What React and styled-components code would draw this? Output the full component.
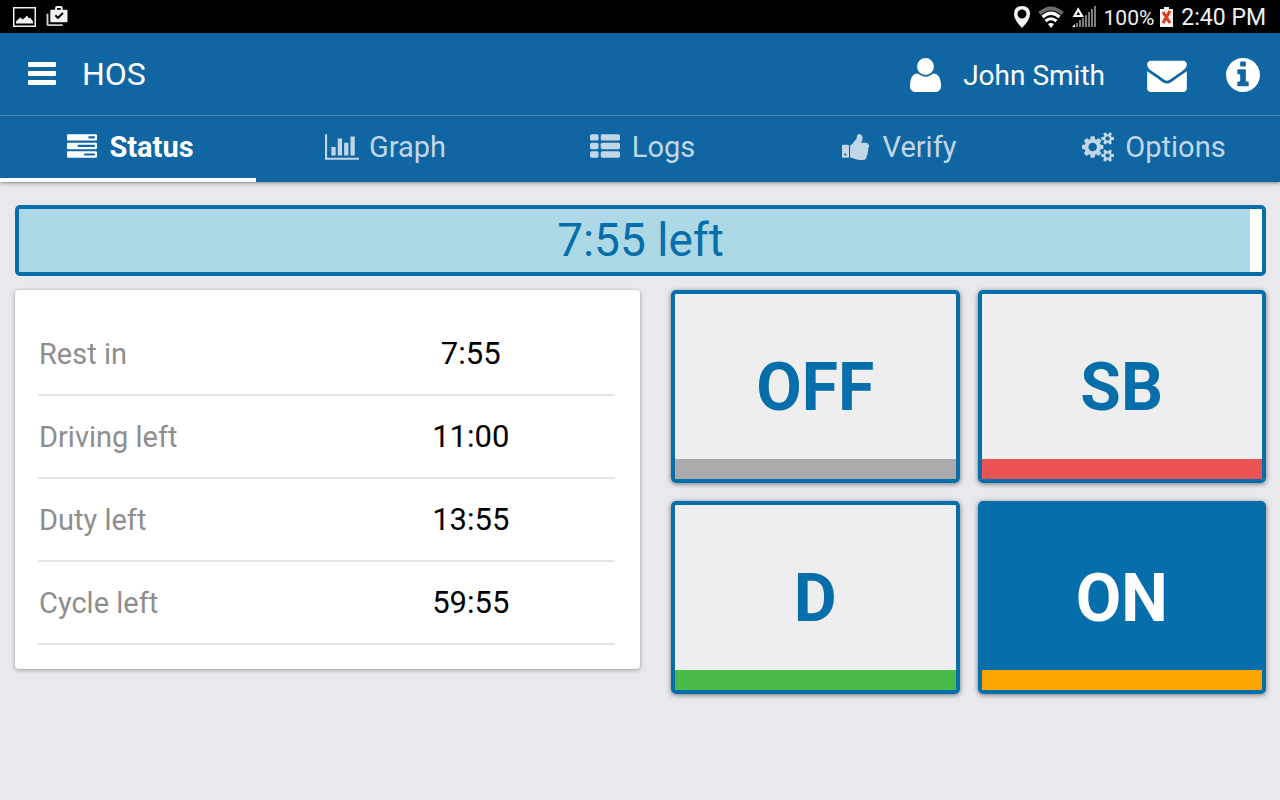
import React from "react";
import styled, { createGlobalStyle } from "styled-components";

const GlobalStyle = createGlobalStyle`
  *, *::before, *::after { box-sizing: border-box; }
  body {
    margin: 0;
    background: #e8e9ed;
    font-family: Roboto, "Liberation Sans", sans-serif;
  }
  button { font-family: inherit; cursor: pointer; }
`;

const StatusBar = styled.div`
  display: flex;
  align-items: center;
  justify-content: space-between;
  height: 33px;
  padding: 0 14px 0 13px;
  background: #000;
  color: #f2f2f2;
`;

const StatusGroup = styled.div`
  display: flex;
  align-items: center;
  gap: ${(p) => p.$gap}px;
`;

const StatusText = styled.span`
  font-size: ${(p) => (p.$large ? 23 : 21)}px;
  line-height: 34px;
  padding-top: 2px;
  white-space: nowrap;
`;

const Icon = styled.svg`
  display: block;
  flex: none;
  fill: currentColor;
`;

const AppBar = styled.header`
  position: relative;
  background: #1066a3;
  color: #fff;
  box-shadow: 0 1px 4px rgba(0, 0, 0, 0.45);
`;

const TitleRow = styled.div`
  display: flex;
  align-items: center;
  justify-content: space-between;
  height: 83px;
  padding: 0 20px 0 28px;
  border-bottom: 1px solid #5288b5;
`;

const TitleGroup = styled.div`
  display: flex;
  align-items: center;
  gap: 26px;
`;

const Title = styled.h1`
  margin: 0;
  font-size: 32px;
  font-weight: 400;
  line-height: 40px;
`;

const Actions = styled.div`
  display: flex;
  align-items: center;
  gap: 39px;
  padding-top: 2px;
`;

const IconButton = styled.button`
  display: flex;
  align-items: center;
  gap: 22px;
  padding: 0;
  border: 0;
  background: none;
  color: inherit;
  font-size: 28px;
  line-height: 36px;
`;

const UserButton = styled(IconButton)`
  padding-right: 3px;
`;

const UserName = styled.span`
  padding-top: 2px;
`;

const Tabs = styled.nav`
  display: grid;
  grid-template-columns: repeat(5, 1fr);
`;

const Tab = styled.a`
  display: flex;
  align-items: center;
  justify-content: center;
  gap: 10px;
  height: 66px;
  padding-left: 3px;
  border-bottom: 4px solid ${(p) => (p.$active ? "#fff" : "transparent")};
  color: ${(p) => (p.$active ? "#fff" : "#c1d7e7")};
  font-size: 29px;
  font-weight: ${(p) => (p.$active ? 700 : 400)};
  line-height: 36px;
  text-decoration: none;
`;

const TabIconSlot = styled.span`
  display: flex;
  justify-content: center;
  width: 34px;
`;

const Main = styled.main`
  display: grid;
  gap: 14px;
  padding: 23px 14px 24px 15px;
`;

const Progress = styled.div`
  display: grid;
  height: 71px;
  border: 4px solid #066fab;
  border-radius: 5px;
  background: #fff;
  color: #066fab;
`;

const ProgressFill = styled.div`
  grid-area: 1 / 1;
  background: #add8e6;
`;

const ProgressLabel = styled.span`
  grid-area: 1 / 1;
  font-size: 46px;
  line-height: 62px;
  text-align: center;
`;

const Columns = styled.div`
  display: grid;
  grid-template-columns: 625fr 595fr;
  align-items: start;
  gap: 31px;
`;

const Card = styled.section`
  padding: 23px 25px 24px 23px;
  border-radius: 4px;
  background: #fff;
  box-shadow: 0 1px 4px rgba(0, 0, 0, 0.35);
`;

const Times = styled.table`
  width: 100%;
  table-layout: fixed;
  border-collapse: separate;
  border-spacing: 0;
  line-height: 36px;
`;

const TimeLabel = styled.th`
  height: 83px;
  padding: 0 1px;
  border-bottom: 2px solid #e3e4e5;
  color: #8e8e8e;
  font-size: 29px;
  font-weight: 400;
  text-align: left;
`;

const TimeValue = styled.td`
  padding: 0;
  border-bottom: 2px solid #e3e4e5;
  color: #000;
  font-size: 31px;
  text-align: center;
`;

const DutyGrid = styled.div`
  display: grid;
  grid-template-columns: 1fr 1fr;
  gap: 18px;
`;

const DutyButton = styled.button`
  display: flex;
  align-items: center;
  justify-content: center;
  height: 193px;
  padding: 2px 0 0;
  border: 4px solid #066fab;
  border-radius: 5px;
  background: linear-gradient(
    to top,
    ${(p) => p.$stripe} 20px,
    ${(p) => (p.$active ? "#066fab" : "#eee")} 20px
  ) padding-box;
  color: ${(p) => (p.$active ? "#fff" : "#066fab")};
  box-shadow: 0 1px 5px rgba(0, 0, 0, 0.5);
  font-size: 66px;
  font-weight: 700;
  line-height: 80px;
`;

const BarsIcon = () => (
  <Icon width="28" height="24" viewBox="0 0 28 24" aria-hidden="true">
    <rect y="0" width="28" height="5" rx="1" />
    <rect y="9" width="28" height="5" rx="1" />
    <rect y="18" width="28" height="5" rx="1" />
  </Icon>
);

const UserIcon = () => (
  <Icon width="31" height="34" viewBox="192 128 1408 1536" aria-hidden="true">
    <path d="M1600 1405q0 120-73 189.5t-194 69.5h-874q-121 0-194-69.5t-73-189.5q0-53 3.5-103.5t14-109 26.5-108.5 43-97.5 62-81 85.5-53.5 111.5-20q9 0 42 21.5t74.5 48 108 48 133.5 21.5 133.5-21.5 108-48 74.5-48 42-21.5q61 0 111.5 20t85.5 53.5 62 81 43 97.5 26.5 108.5 14 109 3.5 103.5zm-320-893q0 159-112.5 271.5t-271.5 112.5-271.5-112.5-112.5-271.5 112.5-271.5 271.5-112.5 271.5 112.5 112.5 271.5z" />
  </Icon>
);

const EnvelopeIcon = () => (
  <Icon width="40" height="34" viewBox="0 128 1792 1536" aria-hidden="true">
    <path d="M1792 710v794q0 66-47 113t-113 47h-1472q-66 0-113-47t-47-113v-794q44 49 101 87 362 246 497 345 57 42 92.5 65.5t94.5 48 110 24.5h2q51 0 110-24.5t94.5-48 92.5-65.5q170-123 498-345 57-39 100-87zm0-294q0 79-49 151t-122 123q-376 261-468 325-10 7-42.5 31t-54 38.5-52 32.5-57.5 27-50 9h-2q-23 0-50-9t-57.5-27-52-32.5-54-38.5-42.5-31q-91-64-262-182.5t-205-142.5q-62-42-117-115.5t-55-136.5q0-78 41.5-130t118.5-52h1472q65 0 112.5 47t47.5 113z" />
  </Icon>
);

const InfoIcon = () => (
  <Icon width="34" height="34" viewBox="128 128 1536 1536" aria-hidden="true">
    <path d="M1152 1376v-160q0-14-9-23t-23-9h-96v-512q0-14-9-23t-23-9h-320q-14 0-23 9t-9 23v160q0 14 9 23t23 9h96v320h-96q-14 0-23 9t-9 23v160q0 14 9 23t23 9h448q14 0 23-9t9-23zm-128-896v-160q0-14-9-23t-23-9h-192q-14 0-23 9t-9 23v160q0 14 9 23t23 9h192q14 0 23-9t9-23zm640 416q0 209-103 385.5t-279.5 279.5-385.5 103-385.5-103-279.5-279.5-103-385.5 103-385.5 279.5-279.5 385.5-103 385.5 103 279.5 279.5 103 385.5z" />
  </Icon>
);

const TasksIcon = () => (
  <Icon width="30" height="26" viewBox="0 128 1792 1536" aria-hidden="true">
    <path
      fillRule="evenodd"
      d="M64 128h1664q64 0 64 64v256q0 64-64 64h-1664q-64 0-64-64v-256q0-64 64-64zM1280 256v128h384v-128zM64 640h1664q64 0 64 64v256q0 64-64 64h-1664q-64 0-64-64v-256q0-64 64-64zM640 768v128h1024v-128zM64 1152h1664q64 0 64 64v256q0 64-64 64h-1664q-64 0-64-64v-256q0-64 64-64zM1024 1280v128h640v-128z"
    />
  </Icon>
);

const ChartIcon = () => (
  <Icon width="34" height="26" viewBox="0 128 2048 1536" aria-hidden="true">
    <path d="M640 896v512h-256v-512h256zm384-512v1024h-256v-1024h256zm1024 1152v128h-2048v-1536h128v1408h1920zm-640-896v768h-256v-768h256zm384-384v1152h-256v-1152h256z" />
  </Icon>
);

const ListIcon = () => (
  <Icon width="30" height="26" viewBox="0 0 1792 1536" aria-hidden="true">
    {[0, 512, 1024].map((y) => (
      <g key={y}>
        <rect y={y} width="512" height="384" rx="96" />
        <rect x="640" y={y} width="1152" height="384" rx="96" />
      </g>
    ))}
  </Icon>
);

const ThumbIcon = () => (
  <Icon width="27" height="26" viewBox="64 128 1600 1536" aria-hidden="true">
    <path d="M320 1344q0-26-19-45t-45-19q-27 0-45.500 19t-18.500 45q0 27 18.500 45.500t45.500 18.500q26 0 45-18.500t19-45.500zm160-512v640q0 26-19 45t-45 19h-288q-26 0-45-19t-19-45v-640q0-26 19-45t45-19h288q26 0 45 19t19 45zm1184 0q0 86-55 149 15 44 15 76 3 76-43 137 17 56 0 117-15 57-54 94 9 112-49 181-64 76-197 78h-129q-66 0-144-15.500t-121.500-29-120.500-39.500q-123-43-158-44-26-1-45-19.500t-19-44.500v-641q0-25 18-43.500t43-20.500q24-2 76-59t101-121q68-87 101-120 18-18 31-48t17.500-48.500 13.500-60.500q7-39 12.500-61t19.500-52 34-50q19-19 45-19 46 0 82.500 10.500t60 26 40 40.500 24 45 12 50 5 45 .500 39q0 38-9.500 76t-19 60-27.500 56q-3 6-10 18t-11 22-8 24h277q78 0 135 57t57 135z" />
  </Icon>
);

const SMALL_COG =
  "v140q0 16-149 31-12 27-30 52 51 113 51 138 0 4-4 7-122 71-124 71-8 0-46-47t-52-68q-20 2-30 2t-30-2q-14 21-52 68t-46 47q-2 0-124-71-4-3-4-7 0-25 51-138-18-25-30-52-149-15-149-31v-140q0-16 149-31 13-29 30-52-51-113-51-138 0-4 4-7 4-2 35-20t59-34 30-16q8 0 46 46.5t52 67.5q20-2 30-2t30 2q51-71 92-112l6-2q4 0 124 70 4 3 4 7 0 25-51 138 17 23 30 52 149 15 149 31z";

const CogsIcon = () => (
  <Icon width="32" height="30" viewBox="0 0 1920 1792" aria-hidden="true">
    <path
      d={
        "M896 896q0-106-75-181t-181-75-181 75-75 181 75 181 181 75 181-75 75-181zm768 512q0-52-38-90t-90-38-90 38-38 90q0 53 37.5 90.5t90.5 37.5 90.5-37.5 37.5-90.5zm0-1024q0-52-38-90t-90-38-90 38-38 90q0 53 37.5 90.5t90.5 37.5 90.5-37.5 37.5-90.5zm-384 421v185q0 10-7 19.5t-16 10.5l-155 24q-11 35-32 76 34 48 90 115 7 11 7 20 0 12-7 19-23 30-82.5 89.5t-78.5 59.5q-11 0-21-7l-115-90q-37 19-77 31-11 108-23 155-7 24-30 24h-186q-11 0-20-7.5t-10-17.5l-23-153q-34-10-75-31l-118 89q-7 7-20 7-11 0-21-8-144-133-144-160 0-9 7-19 10-14 41-53t47-61q-23-44-35-82l-152-24q-10-1-17-9.5t-7-19.5v-185q0-10 7-19.5t16-10.5l155-24q11-35 32-76-34-48-90-115-7-11-7-20 0-12 7-20 22-30 82-89t79-59q11 0 21 7l115 90q34-18 77-32 11-108 23-154 7-24 30-24h186q11 0 20 7.5t10 17.5l23 153q34 10 75 31l118-89q8-7 20-7 11 0 21 8 144 133 144 160 0 8-7 19-12 16-42 54t-45 60q23 48 34 82l152 23q10 2 17 10.5t7 19.5zm640 533" +
        SMALL_COG +
        "m0-1024" +
        SMALL_COG
      }
    />
  </Icon>
);

const PictureIcon = () => (
  <Icon width="23" height="20" viewBox="0 0 23 20" aria-hidden="true">
    <path fillRule="evenodd" d="M0 0h23v20H0zM1.500 1.500v17h20v-17z" />
    <path d="M3 16.500v-2l4-4 3 2 4-4 2 3 1-1 3 4v2z" />
  </Icon>
);

const ClipboardIcon = () => (
  <Icon width="22" height="21" viewBox="0 0 22 22" aria-hidden="true">
    <path d="M0 8h2v11h15v2H2q-2 0-2-2z" opacity="0.85" />
    <path
      fillRule="evenodd"
      d="M9 4V2q0-2 2-2h4q2 0 2 2v2h4q1 0 1 1v11q0 1-1 1H5q-1 0-1-1V5q0-1 1-1zM11 4h4V2h-4zM8.500 10.500l3.500 3.500 6-6-1.500-1.500-4.500 4.500-2-2z"
    />
  </Icon>
);

const PinIcon = () => (
  <Icon width="16" height="22" viewBox="0 0 16 22" aria-hidden="true">
    <path
      fillRule="evenodd"
      d="M8 0q8 0 8 8 0 6-8 14Q0 14 0 8 0 0 8 0zM8 3.500a4.500 4.500 0 1 0 0 9a4.500 4.500 0 1 0 0-9z"
    />
  </Icon>
);

const WifiIcon = () => (
  <Icon width="26" height="22" viewBox="0 0 26 22" aria-hidden="true">
    <g fill="none">
      <path d="M1.500 7.500Q13-2.500 24.500 7.500" stroke="#6b6b6b" strokeWidth="4" />
      <path d="M4.500 11Q13 3.500 21.500 11" stroke="#fff" strokeWidth="3.400" />
      <path d="M7.500 15Q13 10.500 18.500 15" stroke="#fff" strokeWidth="3" />
    </g>
    <path d="M10 18q3-2 6 0l-3 4z" fill="#fff" />
  </Icon>
);

const SignalIcon = () => (
  <Icon width="24" height="23" viewBox="0 0 24 23" aria-hidden="true">
    <g fill="#7c7c7c">
      <rect x="4" y="18" width="2" height="4" />
      <rect x="7" y="15" width="2" height="7" />
      <rect x="10" y="13" width="2" height="9" />
      <rect x="13" y="10" width="2" height="12" />
      <rect x="16" y="7" width="2" height="15" />
      <rect x="19" y="4" width="2" height="18" />
      <rect x="22" y="1" width="2" height="21" />
    </g>
    <path d="M0 22l3-3v3z" fill="#fff" />
    <path d="M2.500 11h7.500L6.200 4.500z" fill="#000" stroke="#fff" strokeWidth="2.200" />
  </Icon>
);

const BatteryIcon = () => (
  <Icon width="13" height="20" viewBox="0 0 13 20" aria-hidden="true">
    <path d="M4 0h5v2h4v18H0V2h4z" fill="#f4f4f4" />
    <path d="M3 5l7 11M10 4L3 16" fill="none" stroke="#e23a17" strokeWidth="3" />
  </Icon>
);

const tabs = [
  { label: "Status", icon: TasksIcon, active: true },
  { label: "Graph", icon: ChartIcon },
  { label: "Logs", icon: ListIcon },
  { label: "Verify", icon: ThumbIcon },
  { label: "Options", icon: CogsIcon },
];

const times = [
  ["Rest in", "7:55"],
  ["Driving left", "11:00"],
  ["Duty left", "13:55"],
  ["Cycle left", "59:55"],
];

const duties = [
  { label: "OFF", stripe: "#aaa" },
  { label: "SB", stripe: "#ea5455" },
  { label: "D", stripe: "#4abb4a" },
  { label: "ON", stripe: "#ffa500", active: true },
];

export default function App() {
  return (
    <>
      <GlobalStyle />
      <StatusBar>
        <StatusGroup $gap={10}>
          <PictureIcon />
          <ClipboardIcon />
        </StatusGroup>
        <StatusGroup $gap={8}>
          <PinIcon />
          <WifiIcon />
          <SignalIcon />
          <StatusGroup $gap={6}>
            <StatusText>100%</StatusText>
            <BatteryIcon />
          </StatusGroup>
          <StatusText $large>2:40 PM</StatusText>
        </StatusGroup>
      </StatusBar>
      <AppBar>
        <TitleRow>
          <TitleGroup>
            <IconButton type="button" aria-label="Menu">
              <BarsIcon />
            </IconButton>
            <Title>HOS</Title>
          </TitleGroup>
          <Actions>
            <UserButton type="button">
              <UserIcon />
              <UserName>John Smith</UserName>
            </UserButton>
            <IconButton type="button" aria-label="Messages">
              <EnvelopeIcon />
            </IconButton>
            <IconButton type="button" aria-label="Information">
              <InfoIcon />
            </IconButton>
          </Actions>
        </TitleRow>
        <Tabs>
          {tabs.map(({ label, icon: TabIcon, active }) => (
            <Tab
              key={label}
              href={"#" + label.toLowerCase()}
              $active={active}
              aria-current={active ? "page" : undefined}
            >
              <TabIconSlot>
                <TabIcon />
              </TabIconSlot>
              {label}
            </Tab>
          ))}
        </Tabs>
      </AppBar>
      <Main>
        <Progress role="progressbar" aria-valuenow={99} aria-label="Time left">
          <ProgressFill style={{ width: "99%" }} />
          <ProgressLabel>7:55 left</ProgressLabel>
        </Progress>
        <Columns>
          <Card>
            <Times>
              <tbody>
                {times.map(([label, value]) => (
                  <tr key={label}>
                    <TimeLabel scope="row">{label}</TimeLabel>
                    <TimeValue>{value}</TimeValue>
                  </tr>
                ))}
              </tbody>
            </Times>
          </Card>
          <DutyGrid>
            {duties.map(({ label, stripe, active }) => (
              <DutyButton
                key={label}
                type="button"
                $stripe={stripe}
                $active={active}
                aria-pressed={!!active}
              >
                {label}
              </DutyButton>
            ))}
          </DutyGrid>
        </Columns>
      </Main>
    </>
  );
}
